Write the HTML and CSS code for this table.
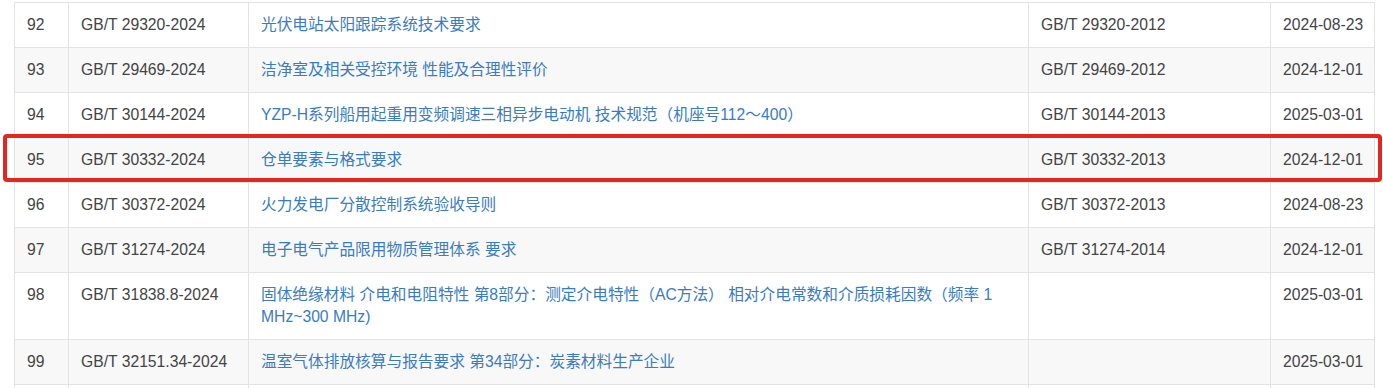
FILE: index.html
```html
<!DOCTYPE html>
<html lang="zh-CN">
<head>
<meta charset="utf-8">
<title>标准列表</title>
<link rel="stylesheet" href="styles.css">
</head>
<body>
<div class="wrap">
  <table class="std-table">
    <colgroup>
      <col class="c-no">
      <col class="c-code">
      <col class="c-name">
      <col class="c-old">
      <col class="c-date">
    </colgroup>
    <tbody>
      <tr><td>92</td><td>GB/T 29320-2024</td><td><a href="#">光伏电站太阳跟踪系统技术要求</a></td><td>GB/T 29320-2012</td><td>2024-08-23</td></tr>
      <tr><td>93</td><td>GB/T 29469-2024</td><td><a href="#">洁净室及相关受控环境 性能及合理性评价</a></td><td>GB/T 29469-2012</td><td>2024-12-01</td></tr>
      <tr><td>94</td><td>GB/T 30144-2024</td><td><a href="#">YZP-H系列船用起重用变频调速三相异步电动机 技术规范（机座号112～400）</a></td><td>GB/T 30144-2013</td><td>2025-03-01</td></tr>
      <tr><td>95</td><td>GB/T 30332-2024</td><td><a href="#">仓单要素与格式要求</a></td><td>GB/T 30332-2013</td><td>2024-12-01</td></tr>
      <tr><td>96</td><td>GB/T 30372-2024</td><td><a href="#">火力发电厂分散控制系统验收导则</a></td><td>GB/T 30372-2013</td><td>2024-08-23</td></tr>
      <tr><td>97</td><td>GB/T 31274-2024</td><td><a href="#">电子电气产品限用物质管理体系 要求</a></td><td>GB/T 31274-2014</td><td>2024-12-01</td></tr>
      <tr><td>98</td><td>GB/T 31838.8-2024</td><td><a href="#">固体绝缘材料 介电和电阻特性 第8部分：测定介电特性（AC方法） 相对介电常数和介质损耗因数（频率 1 MHz~300 MHz)</a></td><td></td><td>2025-03-01</td></tr>
      <tr><td>99</td><td>GB/T 32151.34-2024</td><td><a href="#">温室气体排放核算与报告要求 第34部分：炭素材料生产企业</a></td><td></td><td>2025-03-01</td></tr>
      <tr class="row-next"><td></td><td></td><td></td><td></td><td></td></tr>
    </tbody>
  </table>
  <div class="highlight"></div>
</div>
</body>
</html>
```

FILE: styles.css
```css
html, body {
  margin: 0;
  padding: 0;
  background: #ffffff;
  overflow: hidden;
}

.wrap {
  position: relative;
  padding: 2px 9px 0 14px;
}

.std-table {
  width: 1360px;
  table-layout: fixed;
  border-collapse: collapse;
  font-family: "Liberation Sans", "Noto Sans CJK SC", sans-serif;
  font-size: 15.7px;
  line-height: 22px;
  color: #444444;
}

.c-no { width: 54px; }
.c-code { width: 180px; }
.c-name { width: 780px; }
.c-old { width: 242px; }
.c-date { width: 104px; }

.std-table td {
  border: 1px solid #e3e3e3;
  padding: 11px 8px 11px 12px;
  vertical-align: top;
  white-space: normal;
}

.std-table tbody tr:nth-child(even) td {
  background: #f8f8f8;
}

.std-table .row-next td {
  height: 22px;
}

.std-table a {
  color: #3a7cbd;
  text-decoration: none;
}

.highlight {
  position: absolute;
  left: 3px;
  top: 134px;
  width: 1371px;
  height: 40px;
  border: 4px solid #e4261f;
  border-radius: 4px;
  pointer-events: none;
}
```
